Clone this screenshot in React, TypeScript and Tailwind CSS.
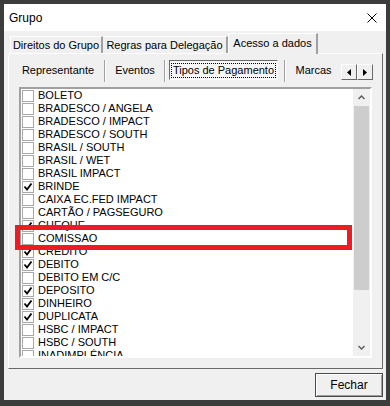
import React from "react";

const items: [string, boolean][] = [
  ["BOLETO", false],
  ["BRADESCO / ANGELA", false],
  ["BRADESCO / IMPACT", false],
  ["BRADESCO / SOUTH", false],
  ["BRASIL / SOUTH", false],
  ["BRASIL / WET", false],
  ["BRASIL IMPACT", false],
  ["BRINDE", true],
  ["CAIXA EC.FED IMPACT", false],
  ["CARTÃO / PAGSEGURO", false],
  ["CHEQUE", true],
  ["COMISSAO", false],
  ["CREDITO", true],
  ["DEBITO", true],
  ["DEBITO EM C/C", false],
  ["DEPOSITO", true],
  ["DINHEIRO", true],
  ["DUPLICATA", true],
  ["HSBC / IMPACT", false],
  ["HSBC / SOUTH", false],
  ["INADIMPLÊNCIA", false],
];

function Check({ on }: { on: boolean }) {
  return (
    <span className="mx-[1px] flex h-[12px] w-[12px] shrink-0 items-center justify-center border border-[#a8a8a8] bg-white">
      {on && (
        <svg width="10" height="10" viewBox="0 0 10 10">
          <path d="M1.5 4.5 L4 7.5 L8.5 1.5" fill="none" stroke="#000" strokeWidth="1.8" />
        </svg>
      )}
    </span>
  );
}

function Sep() {
  return <span className="h-[22px] w-[2px] shrink-0 border-l border-r border-l-[#a0a0a0] border-r-white" />;
}

export default function App() {
  return (
    <div className="relative h-[406px] w-[390px] bg-[#3c3c3c] pb-[6px] pl-[4px] pr-[4px] pt-[4px] font-['Liberation_Sans',Arial,sans-serif] text-black">
      <div className="flex h-full flex-col bg-[#f0f0f0]">
        {/* title */}
        <div className="flex h-[27px] items-center justify-between bg-white pl-[5px] pr-[9px]">
          <span className="text-[12px]">Grupo</span>
          <svg width="10" height="10" viewBox="0 0 10 10">
            <path d="M0.5 0.5 L9.5 9.5 M9.5 0.5 L0.5 9.5" stroke="#000" strokeWidth="1" />
          </svg>
        </div>

        {/* outer tabs */}
        <div className="flex h-[22px] items-end pl-[6px] text-[11px]">
          <div className="flex h-[17px] w-[93px] items-center justify-center border-l border-t border-white border-r-2 border-r-[#a0a0a0]">
            Direitos do Grupo
          </div>
          <div className="flex h-[17px] w-[125px] items-center justify-center border-t border-white border-r-2 border-r-[#a0a0a0]">
            Regras para Delegação
          </div>
          <div className="relative z-10 -mb-px flex h-[21px] w-[90px] items-center justify-center border-l border-t border-white border-r-2 border-r-[#a0a0a0] bg-[#f0f0f0] pb-[2px]">
            Acesso a dados
          </div>
        </div>

        {/* tab panel */}
        <div className="ml-[4px] mr-[3px] flex h-[316px] flex-col border border-b-[#696969] border-l-white border-r-[#696969] border-t-white">
          <div className="ml-[3px] mt-[6px] flex h-[22px] items-start text-[11px]">
            <span className="flex h-[20px] w-[92px] items-center justify-center">Representante</span>
            <Sep />
            <span className="flex h-[20px] w-[58px] items-center justify-center">Eventos</span>
            <Sep />
            <span className="ml-[3px] flex h-[20px] w-[109px] items-center justify-center border border-b-white border-l-[#696969] border-r-white border-t-[#696969] bg-[#f7f7f7]">
              <span className="border border-dotted border-black px-[1px] leading-[13px]">Tipos de Pagamento</span>
            </span>
            <span className="ml-[6px]" />
            <Sep />
            <span className="flex h-[20px] w-[55px] items-center justify-center">Marcas</span>
            <span className="mt-[4px] flex">
              <span className="flex h-[16px] w-[16px] items-center justify-center border border-b-[#696969] border-l-white border-r-[#696969] border-t-white">
                <svg width="4" height="7" viewBox="0 0 4 7"><path d="M4 0 L0 3.5 L4 7 Z" fill="#000" /></svg>
              </span>
              <span className="flex h-[16px] w-[16px] items-center justify-center border border-b-[#696969] border-l-white border-r-[#696969] border-t-white">
                <svg width="4" height="7" viewBox="0 0 4 7"><path d="M0 0 L4 3.5 L0 7 Z" fill="#000" /></svg>
              </span>
            </span>
          </div>

          {/* check list */}
          <div className="mx-[10px] mb-[10px] mt-[5px] flex min-h-0 flex-1 border-2 border-b-white border-l-[#a0a0a0] border-r-white border-t-[#a0a0a0] bg-white">
            <div className="min-w-0 flex-1 overflow-hidden text-[11px]">
              {items.map(([label, on]) => (
                <div key={label} className="flex h-[13px] items-center gap-[3px] leading-[13px]">
                  <Check on={on} />
                  <span className="whitespace-nowrap">{label}</span>
                </div>
              ))}
            </div>
            <div className="flex w-[17px] shrink-0 flex-col bg-[#f0f0f0]">
              <span className="flex h-[17px] items-center justify-center">
                <svg width="7" height="5" viewBox="0 0 7 5"><path d="M0.5 4 L3.5 1 L6.5 4" fill="none" stroke="#606060" strokeWidth="1.5" /></svg>
              </span>
              <span className="mx-[1px] h-[184px] bg-[#cdcdcd]" />
              <span className="flex-1" />
              <span className="flex h-[17px] items-center justify-center">
                <svg width="7" height="5" viewBox="0 0 7 5"><path d="M0.5 1 L3.5 4 L6.5 1" fill="none" stroke="#606060" strokeWidth="1.5" /></svg>
              </span>
            </div>
          </div>
        </div>

        {/* footer */}
        <div className="flex flex-1 items-start justify-end pr-[3px] pt-[4px]">
          <button className="flex h-[24px] w-[68px] items-center justify-center border border-[#4a4a4a] bg-[#f0f0f0] text-[12px] shadow-[inset_1px_1px_0_#fff,inset_-1px_-1px_0_#a0a0a0]">
            Fechar
          </button>
        </div>
      </div>

      {/* red highlight annotation */}
      <div className="absolute left-[15px] top-[225px] h-[25px] w-[337px] border-[5px] border-[#ed1c24]" />
    </div>
  );
}
